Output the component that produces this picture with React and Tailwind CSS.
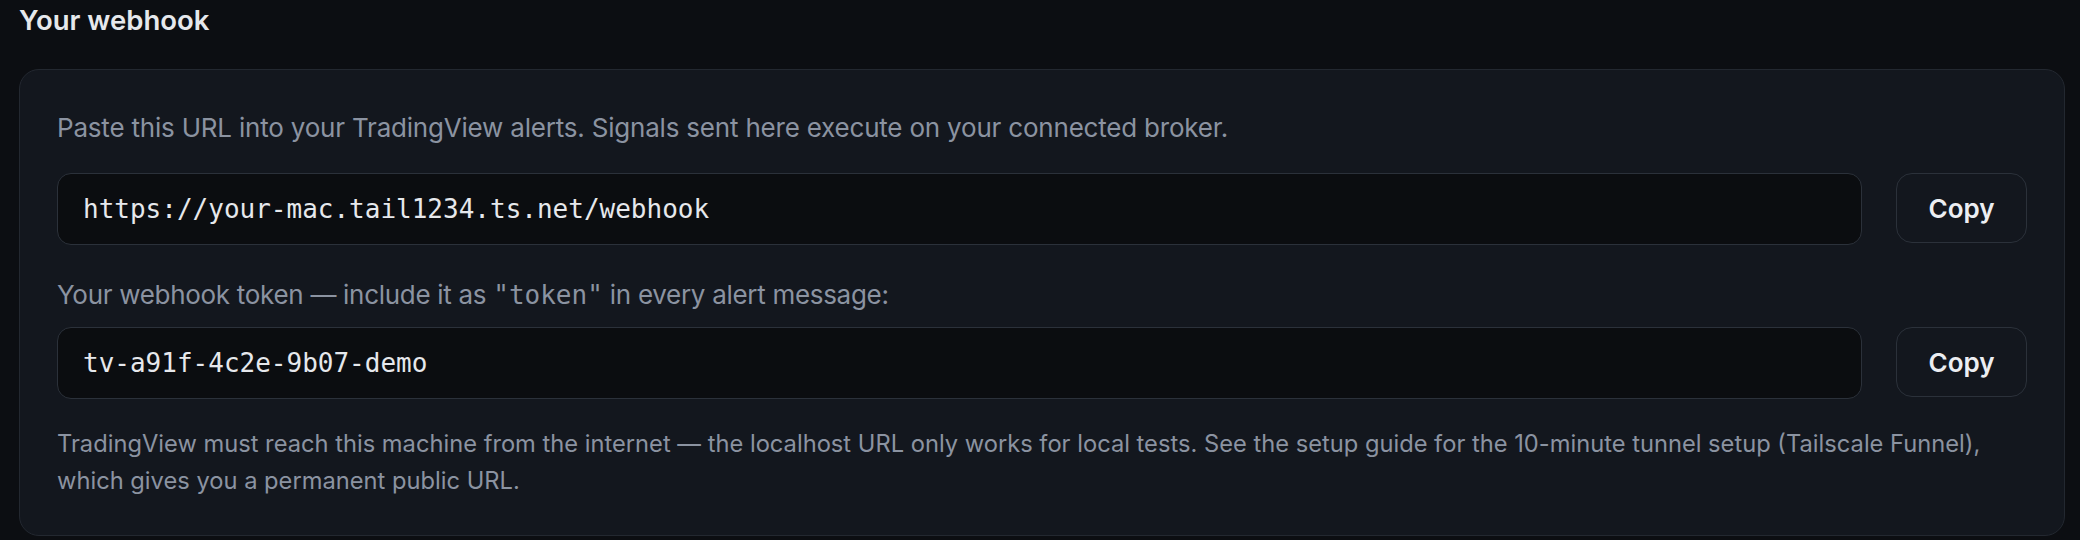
export default function App() {
  const sans = { fontFamily: "Inter, 'Noto Sans', sans-serif" };
  return (
    <div className="min-h-[540px] w-[2080px] bg-[#0c0e12] pl-[19px] pr-[15px]" style={sans}>
      <h2 className="pt-[4px] text-[27.5px] leading-[32px] font-semibold text-[#e6e8ec]">Your webhook</h2>
      <div className="mt-[33px] rounded-[20px] border border-[#232830] bg-[#13171e] px-[37px] pt-[40px] pb-[36px]">
        <p className="text-[26px] leading-[36px] tracking-[-0.2px] text-[#8b93a1]">
          Paste this URL into your TradingView alerts. Signals sent here execute on your connected broker.
        </p>
        <div className="mt-[27px] flex items-start gap-[34px]">
          <div className="flex h-[72px] flex-1 items-center rounded-[14px] border border-[#2b313a] bg-[#0b0d10] px-[25px] font-['DejaVu_Sans_Mono',monospace] text-[26px] text-[#e6e8ec]">
            https://your-mac.tail1234.ts.net/webhook
          </div>
          <button className="h-[70px] w-[131px] rounded-[16px] border border-[#2b313a] bg-[#13171e] text-[26px] font-semibold text-[#eceef2]">
            Copy
          </button>
        </div>
        <p className="mt-[32px] text-[26px] leading-[36px] tracking-[-0.3px] text-[#8b93a1]">
          Your webhook token — include it as{" "}
          <code className="font-['DejaVu_Sans_Mono',monospace] text-[26px] tracking-normal">"token"</code> in every alert message:
        </p>
        <div className="mt-[14px] flex items-start gap-[34px]">
          <div className="flex h-[72px] flex-1 items-center rounded-[14px] border border-[#2b313a] bg-[#0b0d10] px-[25px] font-['DejaVu_Sans_Mono',monospace] text-[26px] text-[#e6e8ec]">
            tv-a91f-4c2e-9b07-demo
          </div>
          <button className="h-[70px] w-[131px] rounded-[16px] border border-[#2b313a] bg-[#13171e] text-[26px] font-semibold text-[#eceef2]">
            Copy
          </button>
        </div>
        <p className="mt-[26px] text-[23.7px] leading-[37px] text-[#8b93a1]">
          TradingView must reach this machine from the internet — the localhost URL only works for local tests. See the setup guide for the 10-minute tunnel setup (Tailscale Funnel), which gives you a permanent public URL.
        </p>
      </div>
    </div>
  );
}
